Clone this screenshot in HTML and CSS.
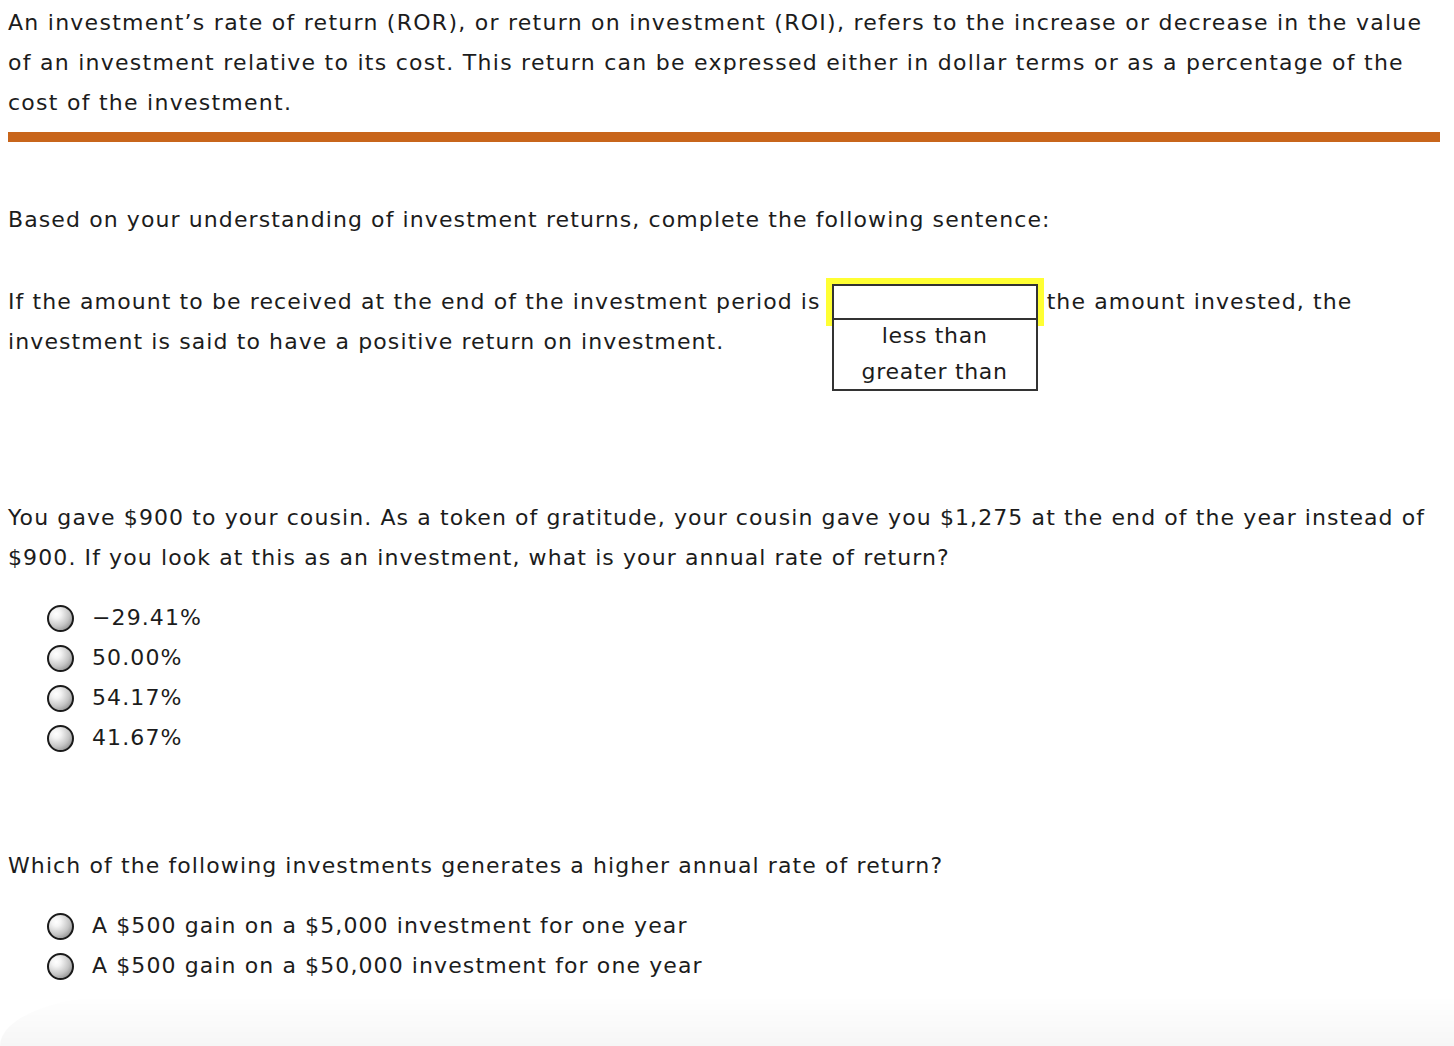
FILE: index.html
```html
<!DOCTYPE html>
<html lang="en">
<head>
<meta charset="utf-8">
<title>Investment returns</title>
<link rel="stylesheet" href="styles.css">
</head>
<body>
<div class="page">
  <p class="intro">An investment’s rate of return (ROR), or return on investment (ROI), refers to the increase or decrease in the value of an investment relative to its cost. This return can be expressed either in dollar terms or as a percentage of the cost of the investment.</p>
  <div class="rule"></div>

  <p class="prompt">Based on your understanding of investment returns, complete the following sentence:</p>

  <p class="sentence">If the amount to be received at the end of the investment period is<span class="dropwrap"><span class="select"></span><span class="options"><span class="option">less than</span><span class="option">greater than</span></span></span>the amount invested, the investment is said to have a positive return on investment.</p>

  <p class="question q2">You gave $900 to your cousin. As a token of gratitude, your cousin gave you $1,275 at the end of the year instead of $900. If you look at this as an investment, what is your annual rate of return?</p>
  <ul class="choices">
    <li class="choice"><span class="radio"></span><span>−29.41%</span></li>
    <li class="choice"><span class="radio"></span><span>50.00%</span></li>
    <li class="choice"><span class="radio"></span><span>54.17%</span></li>
    <li class="choice"><span class="radio"></span><span>41.67%</span></li>
  </ul>

  <p class="question q3">Which of the following investments generates a higher annual rate of return?</p>
  <ul class="choices">
    <li class="choice"><span class="radio"></span><span>A $500 gain on a $5,000 investment for one year</span></li>
    <li class="choice"><span class="radio"></span><span>A $500 gain on a $50,000 investment for one year</span></li>
  </ul>
</div>
<div class="bottom-shade"></div>
</body>
</html>
```

FILE: styles.css
```css
html, body {
  margin: 0;
  padding: 0;
  background: #fff;
}
body {
  font-family: "DejaVu Sans", Verdana, sans-serif;
  font-size: 22px;
  line-height: 40px;
  letter-spacing: 1.1px;
  color: #1c1c1c;
}
.page {
  padding: 3px 14px 0 8px;
}
p {
  margin: 0;
}
.intro {
  letter-spacing: 1.26px;
}
.rule {
  height: 10px;
  background: #c8651b;
  margin: 9px 0 0 0;
}
.prompt {
  margin-top: 58px;
}
.sentence {
  margin-top: 42px;
}
.dropwrap {
  position: relative;
  display: inline-block;
  vertical-align: top;
  box-sizing: border-box;
  width: 218px;
  height: 48px;
  margin: -4px 3px -4px 5px;
  border: 6px solid #ffff33;
  letter-spacing: 0.7px;
}
.select {
  display: block;
  box-sizing: border-box;
  height: 36px;
  border: 2px solid #333;
  background: #fff;
}
.options {
  position: absolute;
  left: 0;
  top: 34px;
  width: 206px;
  box-sizing: border-box;
  border: 2px solid #333;
  background: #fff;
  display: flex;
  flex-direction: column;
  z-index: 2;
}
.option {
  display: block;
  text-align: center;
  line-height: 32px;
  height: 36px;
}
.option:last-child {
  height: 33px;
}
.q2 {
  margin-top: 136px;
}
.q3 {
  margin-top: 88px;
}
.choices {
  list-style: none;
  margin: 20px 0 0 0;
  padding: 0 0 0 39px;
}
.choice {
  display: flex;
  align-items: center;
  gap: 18px;
  height: 40px;
}
.radio {
  flex: none;
  width: 27px;
  height: 27px;
  box-sizing: border-box;
  border-radius: 50%;
  border: 2px solid #1a1a1a;
  background: radial-gradient(circle at 32% 30%, #ffffff 0%, #f4f4f4 20%, #c4c4c4 58%, #6e6e6e 100%);
}
.bottom-shade {
  position: fixed;
  left: 0;
  right: 0;
  bottom: 0;
  height: 50px;
  border-top-left-radius: 120px 50px;
  background: linear-gradient(to bottom, rgba(0,0,0,0), rgba(0,0,0,0.035));
  pointer-events: none;
}
```
